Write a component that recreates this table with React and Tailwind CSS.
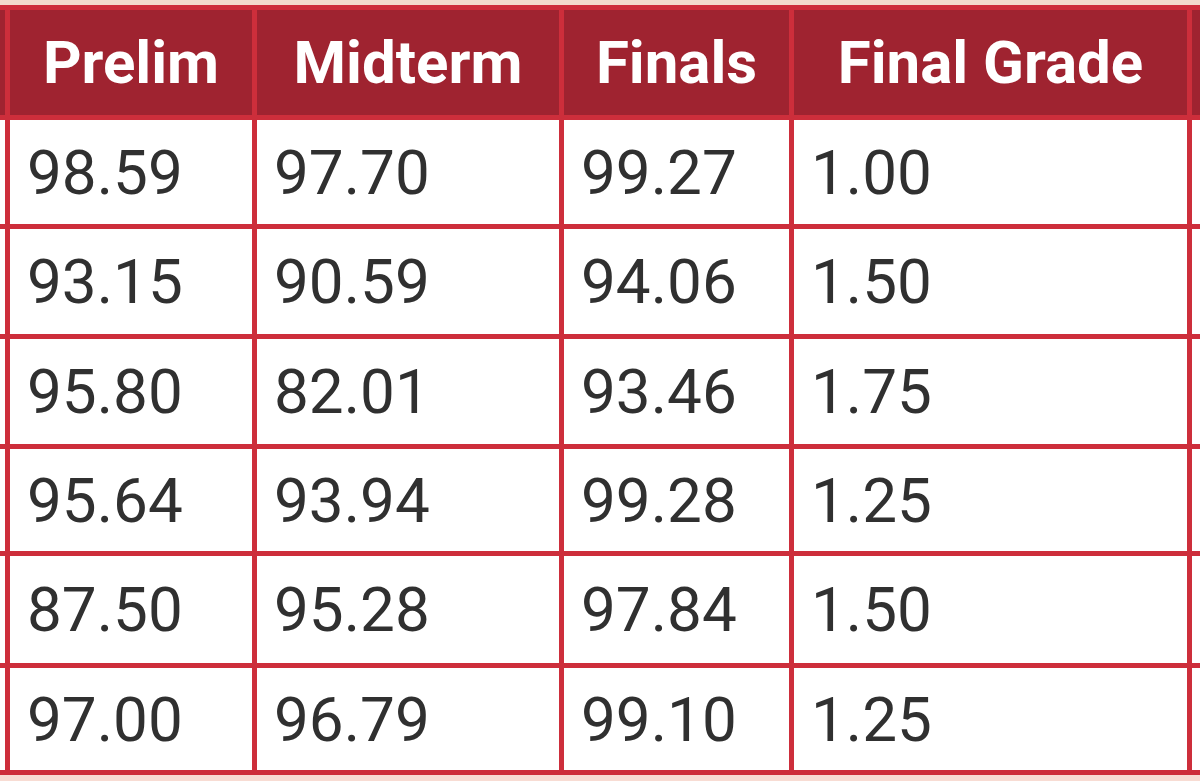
import React from 'react';

const headers = ['Prelim', 'Midterm', 'Finals', 'Final Grade'];

const rows = [
    ['98.59', '97.70', '99.27', '1.00'],
    ['93.15', '90.59', '94.06', '1.50'],
    ['95.80', '82.01', '93.46', '1.75'],
    ['95.64', '93.94', '99.28', '1.25'],
    ['87.50', '95.28', '97.84', '1.50'],
    ['97.00', '96.79', '99.10', '1.25'],
];

const App = () => {
    return (
        <div className="w-[1200px] h-[781px] overflow-hidden bg-white" style={{ fontFamily: 'Roboto, "Liberation Sans", sans-serif' }}>
            <div className="h-[5px] bg-[#f3dbcd]"></div>

            <div className="grid grid-cols-[5px_242px_302px_225px_393px_1fr] grid-rows-[105px_104px_105px_105px_102px_107px_102px] gap-[5px] bg-[#cd2e3b] py-[5px]">
                {/* header row, first and last cells are cut off at the edges */}
                <div className="bg-[#9f2330]"></div>
                {headers.map((h) => (
                    <div key={h} className="bg-[#9f2330] flex items-center justify-center text-white font-bold text-[60px]">
                        {h}
                    </div>
                ))}
                <div className="bg-[#9f2330]"></div>

                {rows.map((r, i) => (
                    <React.Fragment key={i}>
                        <div className="bg-white"></div>
                        {r.map((v, j) => (
                            <div key={j} className="bg-white flex items-center pl-[17px] text-[62px] text-[#303030]">
                                {v}
                            </div>
                        ))}
                        <div className="bg-white"></div>
                    </React.Fragment>
                ))}
            </div>

            <div className="h-[10px] bg-[#f8dcd3]"></div>
        </div>
    );
};

export default App;
